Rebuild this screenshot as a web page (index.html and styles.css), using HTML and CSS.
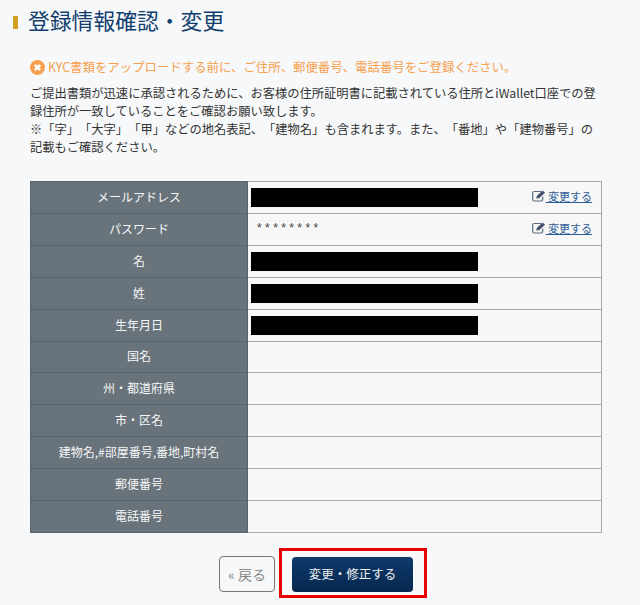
FILE: index.html
```html
<!DOCTYPE html>
<html lang="ja">
<head>
    <meta charset="UTF-8">
    <title>登録情報確認・変更</title>
    <link rel="stylesheet" href="styles.css">
</head>
<body>
    <div class="page">
        <h1 class="page-title">登録情報確認・変更</h1>

        <p class="alert">
            <svg class="alert-icon" width="15" height="15" viewBox="0 0 15 15">
                <circle cx="7.5" cy="7.5" r="7.5" fill="#f6a04d"/>
                <path d="M4.8 4.8L10.2 10.2M10.2 4.8L4.8 10.2" stroke="#fff" stroke-width="2.4"/>
            </svg>
            KYC書類をアップロードする前に、ご住所、郵便番号、電話番号をご登録ください。
        </p>

        <p class="note">ご提出書類が迅速に承認されるために、お客様の住所証明書に記載されている住所とiWallet口座での登録住所が一致していることをご確認お願い致します。<br>※「字」「大字」「甲」などの地名表記、「建物名」も含まれます。また、「番地」や「建物番号」の記載もご確認ください。</p>

        <table class="info-table">
            <tr>
                <th>メールアドレス</th>
                <td>
                    <div class="cell-row">
                        <span class="masked"></span>
                        <a class="edit-link" href="#">
                            <svg width="14" height="12" viewBox="0 0 14 12">
                                <path d="M9 1.5H2.2A1.5 1.5 0 0 0 .7 3v6.5A1.5 1.5 0 0 0 2.2 11h7a1.5 1.5 0 0 0 1.5-1.5V6.5" fill="none" stroke="#5a6b80" stroke-width="1.2"/>
                                <path d="M4.2 8.6L5 5.8 10.6.4l2.4 2.3L7.3 8z" fill="#3f5068"/>
                            </svg>
                            <span> 変更する</span>
                        </a>
                    </div>
                </td>
            </tr>
            <tr>
                <th>パスワード</th>
                <td>
                    <div class="cell-row">
                        <span class="password">********</span>
                        <a class="edit-link" href="#">
                            <svg width="14" height="12" viewBox="0 0 14 12">
                                <path d="M9 1.5H2.2A1.5 1.5 0 0 0 .7 3v6.5A1.5 1.5 0 0 0 2.2 11h7a1.5 1.5 0 0 0 1.5-1.5V6.5" fill="none" stroke="#5a6b80" stroke-width="1.2"/>
                                <path d="M4.2 8.6L5 5.8 10.6.4l2.4 2.3L7.3 8z" fill="#3f5068"/>
                            </svg>
                            <span> 変更する</span>
                        </a>
                    </div>
                </td>
            </tr>
            <tr><th>名</th><td><span class="masked"></span></td></tr>
            <tr><th>姓</th><td><span class="masked"></span></td></tr>
            <tr><th>生年月日</th><td><span class="masked"></span></td></tr>
            <tr><th>国名</th><td></td></tr>
            <tr><th>州・都道府県</th><td></td></tr>
            <tr><th>市・区名</th><td></td></tr>
            <tr><th>建物名,#部屋番号,番地,町村名</th><td></td></tr>
            <tr><th>郵便番号</th><td></td></tr>
            <tr><th>電話番号</th><td></td></tr>
        </table>

        <div class="actions">
            <a class="btn-back" href="#">« 戻る</a>
            <div class="highlight-box">
                <a class="btn-submit" href="#">変更・修正する</a>
            </div>
        </div>
    </div>
</body>
</html>
```

FILE: styles.css
```css
html, body {
    margin: 0;
    padding: 0;
}

body {
    background: #f7f8f9;
    color: #333;
    font-family: "Noto Sans CJK JP", "Liberation Sans", sans-serif;
    font-size: 12px;
    text-spacing-trim: space-all;
    overflow: hidden;
}

.page {
    height: 605px;
    padding: 0 38px 0 30px;
    box-sizing: border-box;
}

.page-title {
    margin: 0 0 0 -17px;
    padding: 5px 0 0 15px;
    height: 47px;
    box-sizing: border-box;
    border: 0;
    font-size: 21.8px;
    font-weight: 400;
    line-height: 30px;
    color: #123f6d;
    position: relative;
}

.page-title::before {
    content: "";
    position: absolute;
    left: 0;
    top: 16px;
    width: 5px;
    height: 13px;
    background: #d1a01f;
}

.alert {
    margin: 11px 0 0;
    display: flex;
    align-items: center;
    gap: 3px;
    color: #f6a04d;
    font-size: 12.42px;
    line-height: 18px;
}

.note {
    margin: 8px 0 0;
    width: 570px;
    font-size: 12.28px;
    line-height: 18px;
}

.info-table {
    margin-top: 25px;
    width: 572px;
    height: 352px;
    border-collapse: collapse;
    table-layout: fixed;
}

.info-table th,
.info-table td {
    height: 31px;
    padding: 0;
    border: 1px solid #a9a9a9;
    box-sizing: border-box;
}

.info-table th {
    width: 217px;
    padding-bottom: 2px;
    background: #68737b;
    border-color: #5a646c;
    color: #f6f6f6;
    font-size: 12px;
    font-weight: 400;
    text-align: center;
}

.info-table td {
    padding: 0 9px 0 3px;
    background: #f7f7f7;
}

.cell-row {
    display: flex;
    align-items: center;
    justify-content: space-between;
}

.masked {
    display: block;
    width: 227px;
    height: 19px;
    background: #000;
}

.password {
    padding: 0 0 2px 6px;
    color: #444;
    font-family: "Liberation Sans", sans-serif;
    font-size: 12px;
    letter-spacing: 3.4px;
}

.edit-link {
    display: flex;
    align-items: center;
    padding-bottom: 2px;
    color: #2f5c96;
    font-size: 11px;
    text-decoration: none;
}

.edit-link span {
    white-space: pre;
    text-decoration: underline;
}

.actions {
    display: flex;
    justify-content: center;
    align-items: flex-start;
    margin: 15px 0 0 0;
    padding-left: 14px;
}

.btn-back {
    display: flex;
    align-items: center;
    justify-content: center;
    margin-top: 8px;
    width: 56px;
    height: 36px;
    box-sizing: border-box;
    border: 1px solid #777;
    border-radius: 4px;
    color: #888;
    font-size: 14px;
    text-decoration: none;
}

.highlight-box {
    margin-left: 4px;
    padding: 6px 11px 3px 10px;
    border: 3px solid #e60000;
}

.btn-submit {
    display: flex;
    align-items: center;
    justify-content: center;
    box-sizing: border-box;
    width: 121px;
    height: 35px;
    padding-bottom: 2px;
    border-radius: 4px;
    background: linear-gradient(#0e3a6a, #06274f);
    color: #f0f0f0;
    font-size: 12.5px;
    text-decoration: none;
}
```
